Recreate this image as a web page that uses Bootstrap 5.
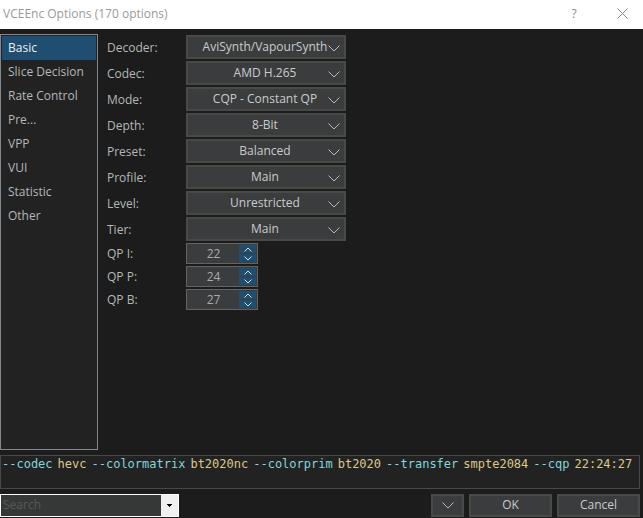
<!DOCTYPE html>
<html lang="en">
<head>
<meta charset="utf-8">
<meta name="viewport" content="width=device-width, initial-scale=1">
<title>VCEEnc Options</title>
<link href="https://cdn.jsdelivr.net/npm/bootstrap@5.3.0/dist/css/bootstrap.min.css" rel="stylesheet">
<style>
body { background: #1c1c1c; color: #b4b8b8; font: 12px/16px "Open Sans", "Noto Sans", sans-serif; }
.titlebar { background: #fff; color: #999; height: 29px; padding: 0 13px 2px 3px; gap: 32px; }
.titlebar h1 { font-size: 12px; line-height: 16px; font-weight: 400; }
.titlebar button { color: #888; font-size: 12px; width: 16px; }
.plain { border: 0; background: none; padding: 0; line-height: 1; }
.frame { padding: 5px 3px 1px 0; gap: 5px; }
.frame svg, .titlebar svg { display: block; margin: 0 auto; }
.pages { width: 98px; border: 1px solid #828790; background: #222; padding: 1px; }
.pages a { height: 24px; line-height: 24px; padding: 0 6px; color: #b4b8b8; text-decoration: none; white-space: nowrap; }
.pages a.active { background: #1f4e70; color: #f0f0f0; }
.options { padding: 1px 9px; }
.option { display: grid; grid-template-columns: 79px 160px; align-items: center; margin-bottom: 2px; }
.option select { height: 24px; border: 2px solid #484a48; background: #3b3c3e url("data:image/svg+xml,%3Csvg xmlns='http://www.w3.org/2000/svg' width='12' height='7'%3E%3Cpath d='M.5.5L6 6 11.5.5' fill='none' stroke='%23b8b8b8'/%3E%3C/svg%3E") no-repeat right 4px top 8px; color: #c8cccc; appearance: none; text-align: center; text-align-last: center; padding: 0 2px 0 0; font-size: 12px; border-radius: 0; }
.option label { padding-top: 1px; }
.spin { width: 72px; height: 21px; border: 1px solid #646464; background: #3b3c3e; padding: 1px; }
.spin input { width: 51px; border: 0; background: none; color: #a8acac; text-align: center; padding: 1px 0 0; appearance: textfield; font-size: 12px; }
.spin input::-webkit-inner-spin-button { appearance: none; }
.steps { width: 17px; gap: 1px; }
.steps button { background: #1f4e70; }
.command { border: 1px solid #484848; background: #222; min-height: 34px; padding: 0 1px; column-gap: 5px; font: 12px/17px "DejaVu Sans Mono", monospace; color: #dcc88a; }
.command .switch { color: #86d4dc; }
.search { width: 179px; height: 23px; border: 1px solid #fff; background: #363838; }
.search input { min-width: 0; border: 0; background: none; color: #b4b8b8; padding: 0 2px 2px; font-size: 12px; }
.search input::placeholder { color: #555858; }
.search button { width: 17px; background: #f0f0f0; }
.actions { gap: 5px; }
.act { width: 83px; height: 23px; border: 2px solid #484a48; background: #3b3c3e; color: #c8cccc; font-size: 12px; line-height: 16px; padding: 0 0 2px; border-radius: 0; }
.act.more { width: 33px; padding: 0; }
</style>
</head>
<body class="d-flex flex-column min-vh-100">
<header class="titlebar d-flex align-items-center">
  <h1 class="mb-0 me-auto">VCEEnc Options (170 options)</h1>
  <button class="plain" type="button" aria-label="Help">?</button>
  <button class="plain" type="button" aria-label="Close"><svg width="11" height="11"><path d="M.5.5l10 10M10.5.5l-10 10" fill="none" stroke="#888"/></svg></button>
</header>
<main class="frame d-flex flex-column flex-grow-1">
  <div class="d-flex flex-grow-1">
    <nav class="pages d-flex flex-column" aria-label="Pages">
      <a class="active" href="#" aria-current="page">Basic</a>
      <a href="#">Slice Decision</a>
      <a href="#">Rate Control</a>
      <a href="#">Pre...</a>
      <a href="#">VPP</a>
      <a href="#">VUI</a>
      <a href="#">Statistic</a>
      <a href="#">Other</a>
    </nav>
    <form class="options">
      <div class="option"><label for="decoder">Decoder:</label><select id="decoder"><option>AviSynth/VapourSynth</option></select></div>
      <div class="option"><label for="codec">Codec:</label><select id="codec"><option>AMD H.265</option></select></div>
      <div class="option"><label for="mode">Mode:</label><select id="mode"><option>CQP - Constant QP</option></select></div>
      <div class="option"><label for="depth">Depth:</label><select id="depth"><option>8-Bit</option></select></div>
      <div class="option"><label for="preset">Preset:</label><select id="preset"><option>Balanced</option></select></div>
      <div class="option"><label for="profile">Profile:</label><select id="profile"><option>Main</option></select></div>
      <div class="option"><label for="level">Level:</label><select id="level"><option>Unrestricted</option></select></div>
      <div class="option"><label for="tier">Tier:</label><select id="tier"><option>Main</option></select></div>
      <div class="option"><label for="qpi">QP I:</label><div class="spin d-flex"><input id="qpi" type="number" value="22"><div class="steps d-flex flex-column"><button class="plain flex-fill" type="button" aria-label="Increase QP I"><svg width="8" height="5"><path d="M.5 4.5L4 1l3.5 3.5" fill="none" stroke="#ddd"/></svg></button><button class="plain flex-fill" type="button" aria-label="Decrease QP I"><svg width="8" height="5"><path d="M.5.5L4 4 7.5.5" fill="none" stroke="#ddd"/></svg></button></div></div></div>
      <div class="option"><label for="qpp">QP P:</label><div class="spin d-flex"><input id="qpp" type="number" value="24"><div class="steps d-flex flex-column"><button class="plain flex-fill" type="button" aria-label="Increase QP P"><svg width="8" height="5"><path d="M.5 4.5L4 1l3.5 3.5" fill="none" stroke="#ddd"/></svg></button><button class="plain flex-fill" type="button" aria-label="Decrease QP P"><svg width="8" height="5"><path d="M.5.5L4 4 7.5.5" fill="none" stroke="#ddd"/></svg></button></div></div></div>
      <div class="option"><label for="qpb">QP B:</label><div class="spin d-flex"><input id="qpb" type="number" value="27"><div class="steps d-flex flex-column"><button class="plain flex-fill" type="button" aria-label="Increase QP B"><svg width="8" height="5"><path d="M.5 4.5L4 1l3.5 3.5" fill="none" stroke="#ddd"/></svg></button><button class="plain flex-fill" type="button" aria-label="Decrease QP B"><svg width="8" height="5"><path d="M.5.5L4 4 7.5.5" fill="none" stroke="#ddd"/></svg></button></div></div></div>
    </form>
  </div>
  <div class="command d-flex flex-wrap align-content-start">
    <span class="switch">--codec</span> <span>hevc</span>
    <span class="switch">--colormatrix</span> <span>bt2020nc</span>
    <span class="switch">--colorprim</span> <span>bt2020</span>
    <span class="switch">--transfer</span> <span>smpte2084</span>
    <span class="switch">--cqp</span> <span>22:24:27</span>
  </div>
  <footer class="d-flex">
    <div class="search d-flex me-auto"><input class="flex-fill" type="text" placeholder="Search" aria-label="Search"><button class="plain flex-shrink-0" type="button" aria-label="Show search results"><svg width="5" height="3"><path d="M0 0h5v1H4v1H3v1H2V2H1V1H0z" fill="#000"/></svg></button></div>
    <div class="actions d-flex">
      <button class="act more" type="button" aria-label="More"><svg width="12" height="7"><path d="M.5.5L6 6 11.5.5" fill="none" stroke="#b8b8b8"/></svg></button>
      <button class="act" type="button">OK</button>
      <button class="act" type="button">Cancel</button>
    </div>
  </footer>
</main>
<script src="https://cdn.jsdelivr.net/npm/bootstrap@5.3.0/dist/js/bootstrap.bundle.min.js"></script>
</body>
</html>
